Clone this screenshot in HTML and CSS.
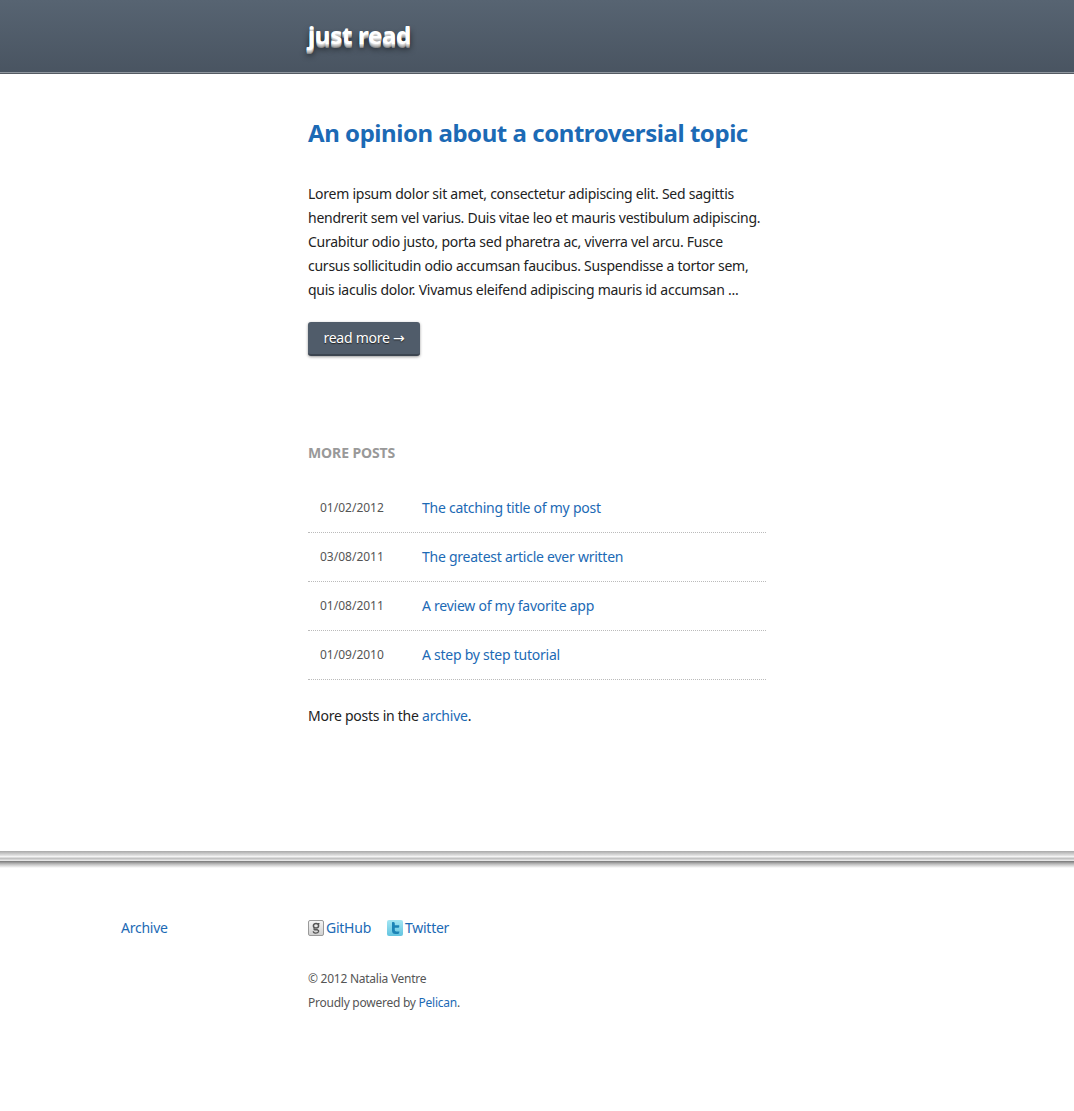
FILE: index.html
```html
<!DOCTYPE html>
<html lang="en">
<head>
<meta charset="utf-8">
<title>just read</title>
<link rel="stylesheet" href="styles.css">
</head>
<body>
<header class="site-header">
  <div class="column"><a class="brand" href="#">just read</a></div>
</header>
<main class="column main">
  <article class="featured">
    <h1 class="post-title"><a href="#">An opinion about a controversial topic</a></h1>
    <p class="excerpt">Lorem ipsum dolor sit amet, consectetur adipiscing elit. Sed sagittis hendrerit sem vel varius. Duis vitae leo et mauris vestibulum adipiscing. Curabitur odio justo, porta sed pharetra ac, viverra vel arcu. Fusce cursus sollicitudin odio accumsan faucibus. Suspendisse a tortor sem, quis iaculis dolor. Vivamus eleifend adipiscing mauris id accumsan ...</p>
    <a class="button" href="#">read more <span class="arrow">→</span></a>
  </article>
  <section class="more">
    <h2 class="more-title">MORE POSTS</h2>
    <ul class="post-list">
      <li class="post-row"><span class="date">01/02/2012</span><a href="#">The catching title of my post</a></li>
      <li class="post-row"><span class="date">03/08/2011</span><a href="#">The greatest article ever written</a></li>
      <li class="post-row"><span class="date">01/08/2011</span><a href="#">A review of my favorite app</a></li>
      <li class="post-row"><span class="date">01/09/2010</span><a href="#">A step by step tutorial</a></li>
    </ul>
    <p class="archive-note">More posts in the <a href="#">archive</a>.</p>
  </section>
</main>
<div class="rule"></div>
<footer class="column footer">
  <nav class="footer-nav"><a href="#">Archive</a></nav>
  <div class="footer-main">
    <div class="social">
      <a class="social-link" href="#">
        <svg class="icon" viewBox="0 0 16 16" aria-hidden="true"><defs><linearGradient id="gh" x1="0" y1="0" x2="0" y2="1"><stop offset="0" stop-color="#f6f6f6"/><stop offset="1" stop-color="#cfcfcf"/></linearGradient></defs><rect x=".5" y=".5" width="15" height="15" rx="1.5" fill="url(#gh)" stroke="#9a9a9a"/><ellipse cx="8" cy="5.800" rx="2.600" ry="2.300" fill="none" stroke="#555" stroke-width="1.500"/><path d="M6.500 8.200Q5.400 9.400 7 9.800H9.500Q11 10.300 10.500 11.800Q9.800 13.200 7.500 13.100Q5 12.900 5.500 11.300M10 3.600H11.500" fill="none" stroke="#555" stroke-width="1.400"/></svg>GitHub</a>
      <a class="social-link" href="#">
        <svg class="icon" viewBox="0 0 16 16" aria-hidden="true"><defs><linearGradient id="tw" x1="0" y1="0" x2="0" y2="1"><stop offset="0" stop-color="#a4e6f3"/><stop offset="1" stop-color="#62c4e0"/></linearGradient></defs><rect width="16" height="16" rx="2" fill="url(#tw)"/><path d="M5 2.2Q7.6 1.600 7.800 3.500V5.200H12.200Q12.600 7.400 11.500 7.800H7.800V10Q7.800 11.400 9.200 11.400H12.400Q12.400 14 10.800 14H8.500Q5 14 5 10.500Z" fill="#1c84b6"/></svg>Twitter</a>
    </div>
    <p class="copy">© 2012 Natalia Ventre</p>
    <p class="copy">Proudly powered by <a href="#">Pelican</a>.</p>
  </div>
</footer>
</body>
</html>
```
FILE: styles.css
```css
* { box-sizing: border-box; }
html, body { margin: 0; padding: 0; }
body {
  background: #fff;
  color: #222;
  font-family: "Noto Sans", "Open Sans", sans-serif;
  font-size: 14px;
  letter-spacing: -0.25px;
  line-height: 24px;
  min-height: 1111px;
}
a { color: #1c6ab5; text-decoration: none; }
.column { width: 458px; margin: 0 auto; }
.site-header {
  height: 74px;
  background: linear-gradient(#576472, #495461);
  border-bottom: 1px solid #555b63;
  box-shadow: inset 0 -1px 0 #8f969e;
}
.brand {
  display: block;
  color: #fff;
  font-size: 24px;
  font-weight: 700;
  letter-spacing: -0.3px;
  line-height: 34px;
  padding-top: 18px;
  text-shadow: 0 1px 0 #ddd, 0 2px 0 #c4c4c4, 0 3px 0 #aaa, 0 4px 0 #888, 0 5px 6px rgba(0,0,0,.7);
}
.main { padding-top: 42px; }
.post-title { margin: 0; font-size: 24px; letter-spacing: -0.45px; line-height: 34px; font-weight: 700; }
.excerpt { margin: 32px 0 0; color: #222; }
.button {
  display: inline-block;
  margin-top: 20px;
  width: 112px;
  height: 34px;
  line-height: 32px;
  text-align: center;
  color: #fff;
  background: #505c6a;
  border-radius: 3px;
  border-bottom: 2px solid #3c4550;
  box-shadow: 0 1px 3px rgba(0,0,0,.4);
  text-shadow: 0 1px 1px #222;
}
.arrow { font-family: "DejaVu Sans", sans-serif; font-size: 14px; }
.more { margin-top: 85px; }
.more-title { margin: 0; color: #999; font-size: 14px; font-weight: 700; letter-spacing: -0.1px; line-height: 24px; }
.post-list { list-style: none; margin: 19px 0 0; padding: 0; }
.post-row {
  display: flex;
  align-items: center;
  height: 49px;
  padding-left: 12px;
  border-bottom: 1px dotted #bbb;
}
.date { width: 102px; color: #555; font-size: 12px; letter-spacing: 0; }
.archive-note { margin: 24px 0 0; }
.rule {
  margin-top: 123px;
  height: 17px;
  background: linear-gradient(#a8a8a8, #e8e8e8 5px, #fff 6px, #b8b8b8 7px, #eee 10px, #777 10px, #bbb 13px, #fff 17px);
}
.footer { display: flex; padding-top: 48px; }
.footer-nav { margin-left: -187px; width: 187px; flex: none; }
.footer-main { flex: none; width: 458px; }
.social { display: flex; gap: 16px; margin-bottom: 27px; }
.social-link { display: flex; align-items: center; gap: 2px; }
.icon { width: 16px; height: 16px; }
.copy { margin: 0; color: #555; font-size: 12px; letter-spacing: -0.25px; }
```
